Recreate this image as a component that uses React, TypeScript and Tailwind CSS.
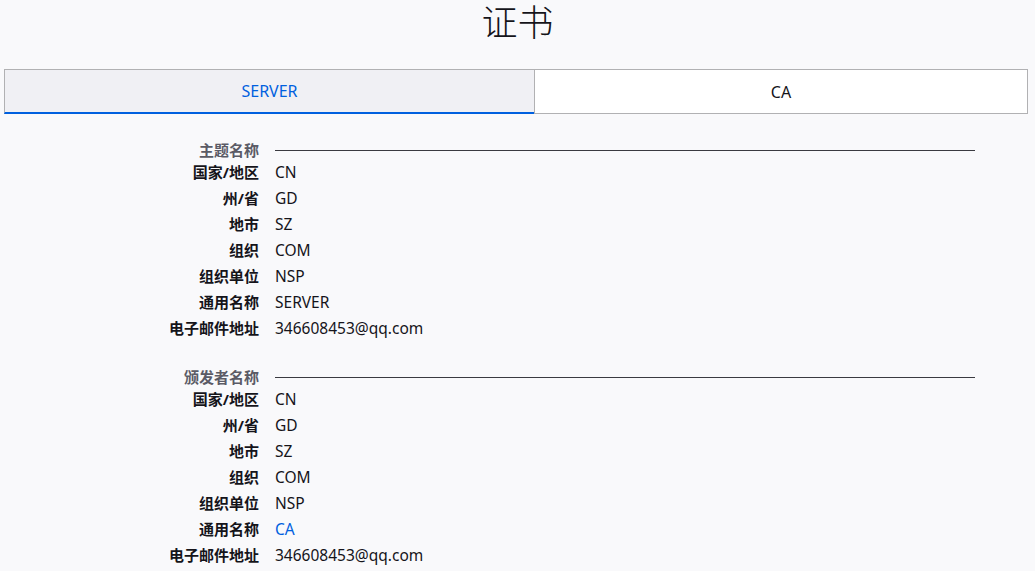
import { useState } from 'react';

interface Field {
  label: string;
  value: string;
  link?: boolean;
}

const subject: Field[] = [
  { label: '国家/地区', value: 'CN' },
  { label: '州/省', value: 'GD' },
  { label: '地市', value: 'SZ' },
  { label: '组织', value: 'COM' },
  { label: '组织单位', value: 'NSP' },
  { label: '通用名称', value: 'SERVER' },
  { label: '电子邮件地址', value: '346608453@qq.com' },
];

const issuer: Field[] = [
  { label: '国家/地区', value: 'CN' },
  { label: '州/省', value: 'GD' },
  { label: '地市', value: 'SZ' },
  { label: '组织', value: 'COM' },
  { label: '组织单位', value: 'NSP' },
  { label: '通用名称', value: 'CA', link: true },
  { label: '电子邮件地址', value: '346608453@qq.com' },
];

function Section({ title, fields }: { title: string; fields: Field[] }) {
  return (
    <section className="flex flex-col">
      <div className="flex items-center h-[18px]">
        <span className="w-[200px] shrink-0 text-right font-bold text-[#5b5b66]">{title}</span>
        <span className="ml-[16px] flex-1 h-px bg-[#3a3a40]" />
      </div>
      {fields.map((f) => (
        <div key={f.label} className="flex items-baseline h-[26px] leading-[26px]">
          <span className="w-[200px] shrink-0 text-right font-bold text-[#15141a]">{f.label}</span>
          <span className={`ml-[16px] text-[15.5px] ${f.link ? 'text-[#0060df]' : 'text-[#15141a]'}`}>{f.value}</span>
        </div>
      ))}
    </section>
  );
}

export default function App() {
  const [tab, setTab] = useState('SERVER');

  return (
    <div
      className="min-h-screen bg-[#f9f9fb] text-[15px] text-[#15141a]"
      style={{ fontFamily: '"Noto Sans", "Noto Sans CJK SC", sans-serif' }}
    >
      <h1 className="h-[69px] pt-[1px] text-center text-[36px] leading-[44px] font-light text-[#15141a]">证书</h1>

      <div className="mx-[4px] mr-[7px] flex h-[45px]">
        {['SERVER', 'CA'].map((t) => {
          const active = tab === t;
          return (
            <button
              key={t}
              onClick={() => setTab(t)}
              className={`flex items-center justify-center border border-[#b1b1b3] text-[16px] ${
                t === 'SERVER' ? 'w-[530px] border-r-0' : 'flex-1'
              } ${active ? 'bg-[#f0f0f4] text-[#0060df] border-b-2 border-b-[#0060df]' : 'bg-white text-[#15141a]'}`}
            >
              {t}
            </button>
          );
        })}
      </div>

      <div className="pl-[59px] pr-[60px] pt-[27px] flex flex-col gap-[27px]">
        <Section title="主题名称" fields={subject} />
        <Section title="颁发者名称" fields={issuer} />
      </div>
    </div>
  );
}
